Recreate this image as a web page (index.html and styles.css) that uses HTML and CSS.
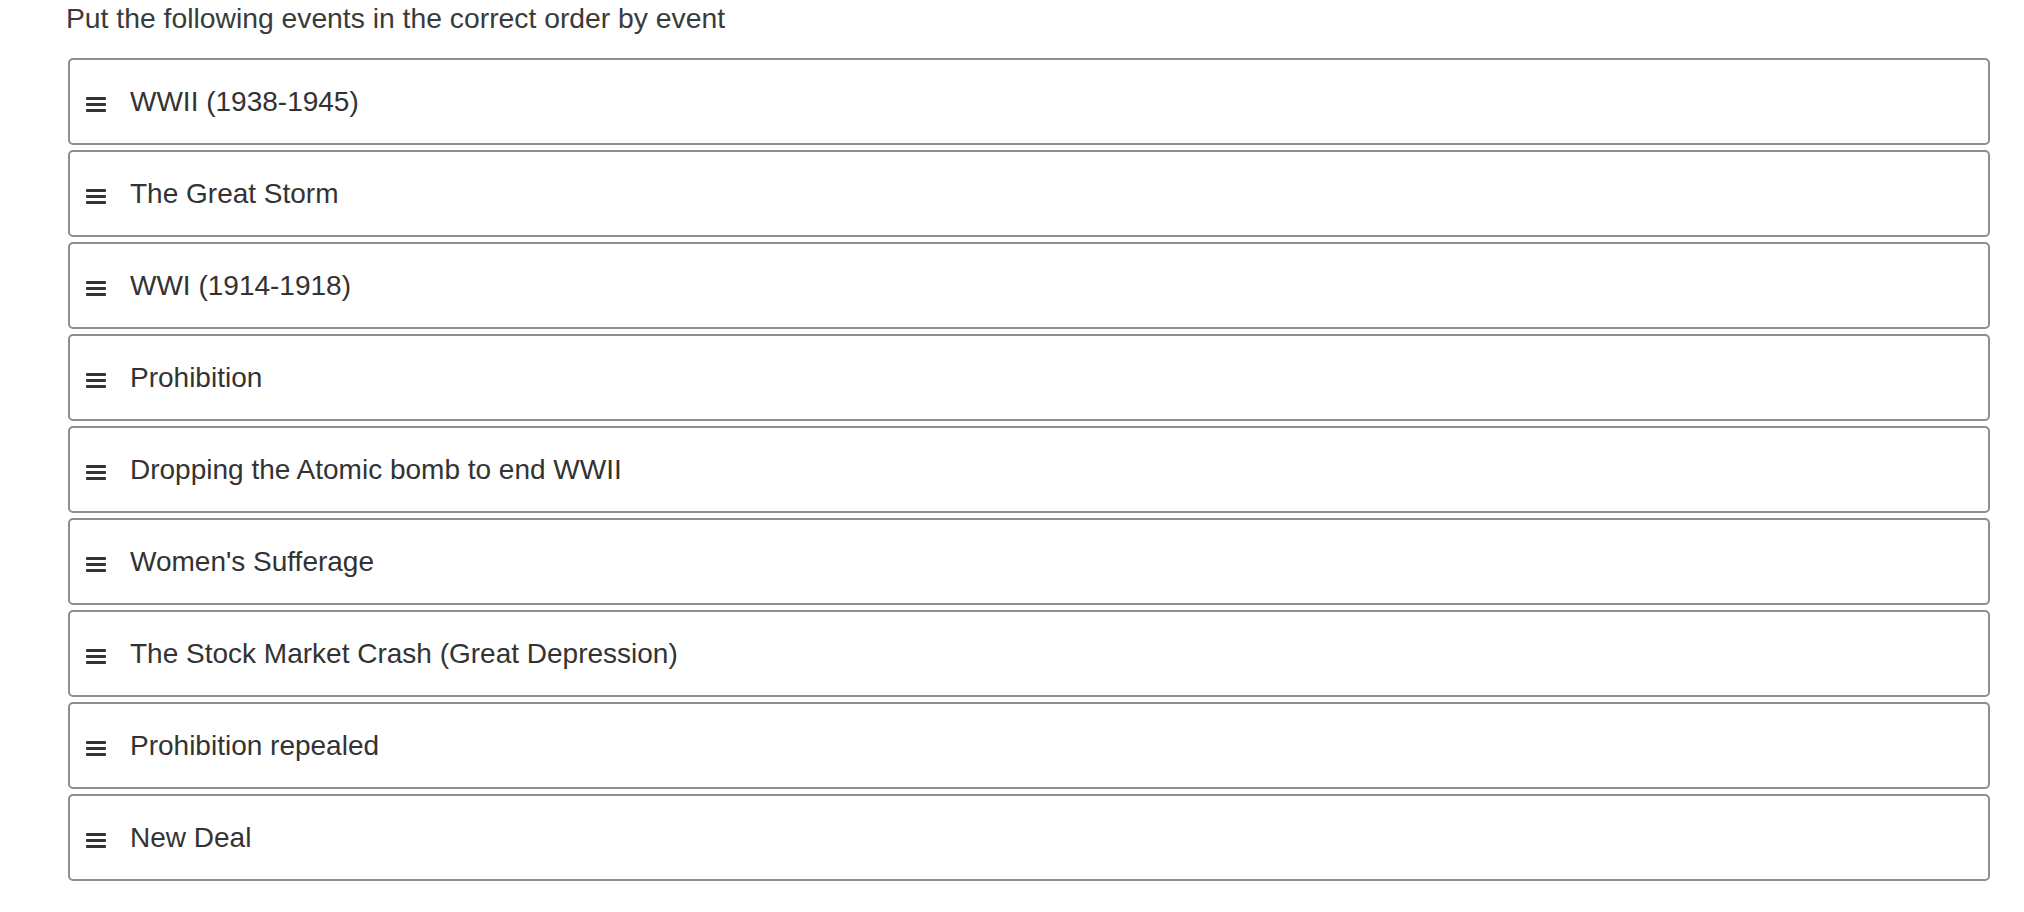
FILE: index.html
```html
<!DOCTYPE html>
<html>
<head>
<meta charset="utf-8">
<link rel="stylesheet" href="styles.css">
</head>
<body>
<div class="question">
  <p class="prompt">Put the following events in the correct order by event</p>
  <ul class="order-list">
    <li class="order-item"><svg class="handle" viewBox="0 0 20 15" width="20" height="15"><rect x="0" y="0" width="20" height="3" rx="1"/><rect x="0" y="6" width="20" height="3" rx="1"/><rect x="0" y="12" width="20" height="3" rx="1"/></svg><span class="label">WWII (1938-1945)</span></li>
    <li class="order-item"><svg class="handle" viewBox="0 0 20 15" width="20" height="15"><rect x="0" y="0" width="20" height="3" rx="1"/><rect x="0" y="6" width="20" height="3" rx="1"/><rect x="0" y="12" width="20" height="3" rx="1"/></svg><span class="label">The Great Storm</span></li>
    <li class="order-item"><svg class="handle" viewBox="0 0 20 15" width="20" height="15"><rect x="0" y="0" width="20" height="3" rx="1"/><rect x="0" y="6" width="20" height="3" rx="1"/><rect x="0" y="12" width="20" height="3" rx="1"/></svg><span class="label">WWI (1914-1918)</span></li>
    <li class="order-item"><svg class="handle" viewBox="0 0 20 15" width="20" height="15"><rect x="0" y="0" width="20" height="3" rx="1"/><rect x="0" y="6" width="20" height="3" rx="1"/><rect x="0" y="12" width="20" height="3" rx="1"/></svg><span class="label">Prohibition</span></li>
    <li class="order-item"><svg class="handle" viewBox="0 0 20 15" width="20" height="15"><rect x="0" y="0" width="20" height="3" rx="1"/><rect x="0" y="6" width="20" height="3" rx="1"/><rect x="0" y="12" width="20" height="3" rx="1"/></svg><span class="label">Dropping the Atomic bomb to end WWII</span></li>
    <li class="order-item"><svg class="handle" viewBox="0 0 20 15" width="20" height="15"><rect x="0" y="0" width="20" height="3" rx="1"/><rect x="0" y="6" width="20" height="3" rx="1"/><rect x="0" y="12" width="20" height="3" rx="1"/></svg><span class="label">Women's Sufferage</span></li>
    <li class="order-item"><svg class="handle" viewBox="0 0 20 15" width="20" height="15"><rect x="0" y="0" width="20" height="3" rx="1"/><rect x="0" y="6" width="20" height="3" rx="1"/><rect x="0" y="12" width="20" height="3" rx="1"/></svg><span class="label">The Stock Market Crash (Great Depression)</span></li>
    <li class="order-item"><svg class="handle" viewBox="0 0 20 15" width="20" height="15"><rect x="0" y="0" width="20" height="3" rx="1"/><rect x="0" y="6" width="20" height="3" rx="1"/><rect x="0" y="12" width="20" height="3" rx="1"/></svg><span class="label">Prohibition repealed</span></li>
    <li class="order-item"><svg class="handle" viewBox="0 0 20 15" width="20" height="15"><rect x="0" y="0" width="20" height="3" rx="1"/><rect x="0" y="6" width="20" height="3" rx="1"/><rect x="0" y="12" width="20" height="3" rx="1"/></svg><span class="label">New Deal</span></li>
  </ul>
</div>
</body>
</html>
```
FILE: styles.css
```css
html, body {
  margin: 0;
  padding: 0;
  background: #ffffff;
}

body {
  font-family: "Liberation Sans", Arial, Helvetica, sans-serif;
  color: #333333;
}

.question {
  padding: 2px 34px 0 66px;
}

.prompt {
  margin: 0;
  font-size: 28.3px;
  line-height: 32px;
  color: #3a3a3a;
}

.order-list {
  list-style: none;
  margin: 24px 0 0 2px;
  padding: 0;
  display: flex;
  flex-direction: column;
  gap: 5px;
}

.order-item {
  box-sizing: border-box;
  height: 87px;
  border: 2px solid #8e8e8e;
  border-radius: 5px;
  display: flex;
  align-items: center;
  padding-left: 16px;
  background: #ffffff;
}

.handle {
  flex: none;
  fill: #333333;
  margin-top: 6px;
  margin-right: 24px;
}

.label {
  font-size: 28px;
  line-height: 32px;
  color: #333333;
}
```
